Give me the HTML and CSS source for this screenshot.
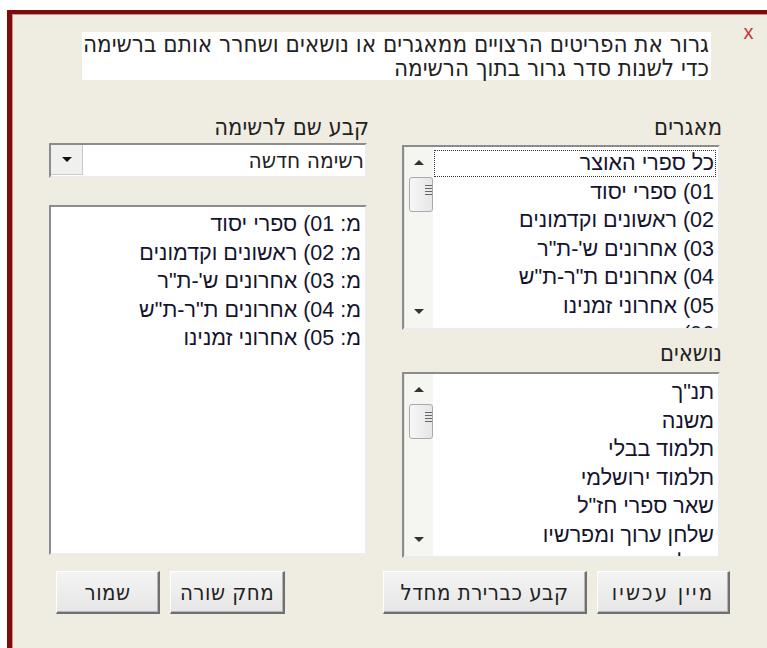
FILE: index.html
```html
<!DOCTYPE html>
<html lang="he">
<head>
<meta charset="utf-8">
<title>סידור רשימה</title>
<link rel="stylesheet" href="styles.css">
</head>
<body>
<div class="dialog" dir="rtl">
  <div class="top">
    <button class="close" type="button">x</button>
    <div class="hint">גרור את הפריטים הרצויים ממאגרים או נושאים ושחרר אותם ברשימה<br>כדי לשנות סדר גרור בתוך הרשימה</div>
  </div>

  <div class="panes">
    <section class="pane">
      <div class="label">מאגרים</div>
      <div class="listbox sources">
        <div class="vscroll">
          <span class="arrow up"></span>
          <span class="thumb"><i></i><i></i><i></i><i></i></span>
          <span class="track"></span>
          <span class="arrow down"></span>
        </div>
        <ul class="items">
          <li class="focused">כל ספרי האוצר</li>
          <li>01) ספרי יסוד</li>
          <li>02) ראשונים וקדמונים</li>
          <li>03) אחרונים ש'-ת"ר</li>
          <li>04) אחרונים ת"ר-ת"ש</li>
          <li>05) אחרוני זמנינו</li>
          <li>06) ספרים נוספים</li>
        </ul>
      </div>

      <div class="label second">נושאים</div>
      <div class="listbox topics">
        <div class="vscroll">
          <span class="arrow up"></span>
          <span class="thumb"><i></i><i></i><i></i><i></i></span>
          <span class="track"></span>
          <span class="arrow down"></span>
        </div>
        <ul class="items">
          <li>תנ"ך</li>
          <li>משנה</li>
          <li>תלמוד בבלי</li>
          <li>תלמוד ירושלמי</li>
          <li>שאר ספרי חז"ל</li>
          <li>שלחן ערוך ומפרשיו</li>
          <li>קבלה ומחשבה</li>
        </ul>
      </div>
    </section>

    <section class="pane">
      <div class="label">קבע שם לרשימה</div>
      <div class="combo">
        <span class="combo-value">רשימה חדשה</span>
        <span class="combo-btn"><span class="arrow down dark"></span></span>
      </div>
      <div class="listbox target">
        <ul class="items">
          <li>מ: 01) ספרי יסוד</li>
          <li>מ: 02) ראשונים וקדמונים</li>
          <li>מ: 03) אחרונים ש'-ת"ר</li>
          <li>מ: 04) אחרונים ת"ר-ת"ש</li>
          <li>מ: 05) אחרוני זמנינו</li>
        </ul>
      </div>
    </section>
  </div>

  <div class="actions">
    <div class="group right">
      <button class="btn sort" type="button">מיין עכשיו</button>
      <button class="btn default" type="button">קבע כברירת מחדל</button>
    </div>
    <div class="group left">
      <button class="btn remove" type="button">מחק שורה</button>
      <button class="btn save" type="button">שמור</button>
    </div>
  </div>
</div>
</body>
</html>
```

FILE: styles.css
```css
html, body {
  margin: 0;
  height: 100%;
}

body {
  background: #ffffff;
  overflow: hidden;
  font-family: "DejaVu Sans Condensed", "DejaVu Sans", sans-serif;
  color: #222;
}

/* window frame */
.dialog {
  box-sizing: border-box;
  margin: 10px 0 0 7px;
  width: 760px;
  height: 638px;
  background: #efece2;
  border-top: 4px solid #7e0a0a;
  border-left: 5px solid #7e0a0a;
  box-shadow: inset 1px 1px 0 #c89090;
  padding: 0 12px 0 0;
  display: flex;
  flex-direction: column;
}

/* header: close button + instructions */
.top {
  display: flex;
  align-items: flex-start;
  height: 66px;
}

.close {
  margin: 9px 0 0 0;
  padding: 0;
  width: 13px;
  height: 18px;
  border: 0;
  background: none;
  color: #c23a3a;
  font-family: "Liberation Sans", sans-serif;
  font-size: 20px;
  line-height: 18px;
}

.hint {
  margin: 18px 31px 0 0;
  width: 629px;
  height: 48px;
  box-sizing: border-box;
  padding: 0 2px 0 0;
  background: #ffffff;
  font-size: 24px;
  line-height: 24px;
  white-space: nowrap;
}

/* two columns */
.panes {
  margin-top: 34px;
  padding-right: 35px;
  display: grid;
  grid-template-columns: 318px 318px;
  column-gap: 35px;
}

.pane {
  display: flex;
  flex-direction: column;
}

.label {
  height: 26px;
  line-height: 26px;
  font-size: 23.5px;
  margin-right: -2px;
}

.label.second {
  margin-top: 10px;
}

/* sunken list boxes */
.listbox {
  box-sizing: border-box;
  background: #ffffff;
  border-top: 2px solid #8c8c8c;
  border-left: 2px solid #8c8c8c;
  border-right: 2px solid #ececec;
  border-bottom: 2px solid #ececec;
  display: flex;
  overflow: hidden;
}

.listbox.sources {
  margin-top: 5px;
  height: 185px;
}

.listbox.topics {
  margin-top: 6px;
  height: 186px;
}

.listbox.target {
  margin-top: 27px;
  height: 350px;
}

.items {
  list-style: none;
  margin: 0;
  padding: 2px 1px 0 0;
  flex: 1;
  font-family: "Liberation Sans", "DejaVu Sans", sans-serif;
  font-size: 21.5px;
  color: #14142e;
}

.items li {
  height: 28.5px;
  line-height: 28.5px;
  padding-right: 3px;
  white-space: nowrap;
}

.items li.focused {
  outline: 1px dotted #333;
  outline-offset: -2px;
}

.topics .items {
  padding-top: 4px;
}

.target .items {
  padding-top: 3px;
}

/* vertical scrollbar (RTL: on the left) */
.vscroll {
  order: 2;
  width: 29px;
  flex: none;
  background: #f5f5f2;
  border-left: 1px solid #e2e2e2;
  display: flex;
  flex-direction: column;
  align-items: center;
  padding-top: 13px;
  padding-bottom: 14px;
  box-sizing: border-box;
}

.arrow {
  width: 0;
  height: 0;
  border-left: 5px solid transparent;
  border-right: 5px solid transparent;
}

.arrow.up {
  border-bottom: 5px solid #333;
}

.arrow.down {
  border-top: 5px solid #333;
}

.arrow.dark {
  border-top: 5px solid #111;
}

.thumb {
  margin-top: 12px;
  align-self: flex-start;
  margin-left: 2px;
  width: 24px;
  height: 35px;
  box-sizing: border-box;
  border: 1px solid #a9a9a9;
  border-radius: 3px;
  background: linear-gradient(to right, #f7f7f7, #e6e6e6);
  display: flex;
  flex-direction: column;
  gap: 2px;
  padding: 7px 0 0 5px;
}

.thumb i {
  display: block;
  width: 7px;
  height: 1px;
  background: #666;
  align-self: flex-start;
}

.track {
  flex: 1;
}

/* combo box */
.combo {
  margin-top: 3px;
  height: 35px;
  box-sizing: border-box;
  background: #ffffff;
  border-top: 2px solid #8c8c8c;
  border-left: 2px solid #8c8c8c;
  border-right: 2px solid #ececec;
  border-bottom: 2px solid #ececec;
  display: flex;
  align-items: stretch;
}

.combo-value {
  flex: 1;
  font-size: 22.5px;
  line-height: 31px;
  padding-right: 1px;
}

.combo-btn {
  width: 32px;
  box-sizing: border-box;
  margin: 0 0 1px 0;
  background: #f0f0ee;
  border-right: 1px solid #c9c9c9;
  border-bottom: 1px solid #c9c9c9;
  display: flex;
  align-items: center;
  justify-content: center;
}

/* bottom buttons */
.actions {
  margin-top: 13px;
  display: flex;
  justify-content: space-between;
  padding-left: 44px;
}

.group {
  display: flex;
  gap: 10px;
}

.group.right {
  margin-right: 25px;
}

.btn {
  height: 43px;
  box-sizing: border-box;
  padding: 0;
  font-family: "DejaVu Sans Condensed", "DejaVu Sans", sans-serif;
  font-size: 22px;
  letter-spacing: 0.5px;
  color: #222;
  background: linear-gradient(#f4f4f4, #e6e6e6);
  border-top: 1px solid #ffffff;
  border-right: 2px solid #707070;
  border-left: 1px solid #ffffff;
  border-bottom: 2px solid #707070;
  box-shadow: inset -1px -1px 0 #b5b5b5;
}

.btn.sort { width: 133px; letter-spacing: 2.2px; }
.btn.default { width: 204px; }
.btn.remove { width: 115px; }
.btn.save { width: 104px; }
```
